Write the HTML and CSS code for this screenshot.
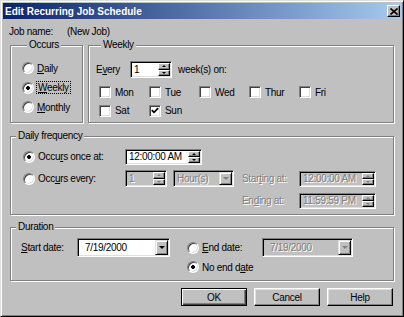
FILE: index.html
```html
<!DOCTYPE html>
<html lang="en">
<head>
  <meta charset="UTF-8" />
  <title>Edit Recurring Job Schedule</title>
  <link rel="stylesheet" href="styles.css">
</head>
<body>
  <div class="window">
    <div class="titlebar">
      <span class="title">Edit Recurring Job Schedule</span>
      <span class="close-btn">
        <svg width="8" height="7" viewBox="0 0 8 7"><path d="M0.5 0.5 L7.5 6.5 M7.5 0.5 L0.5 6.5" stroke="#000" stroke-width="1.6"/></svg>
      </span>
    </div>

    <div class="content">
      <div class="job-row">
        <span class="job-label">Job name:</span>
        <span>(New Job)</span>
      </div>

      <div class="top-row">
        <!-- Occurs -->
        <fieldset class="group occurs">
          <legend>Occurs</legend>
          <div class="radio-list">
            <div class="radio-row"><span class="radio"></span><span><u>D</u>aily</span></div>
            <div class="radio-row"><span class="radio checked"></span><span class="focus"><u>W</u>eekly</span></div>
            <div class="radio-row"><span class="radio"></span><span><u>M</u>onthly</span></div>
          </div>
        </fieldset>

        <!-- Weekly -->
        <fieldset class="group weekly">
          <legend>Weekly</legend>
          <div class="every-row">
            <span class="every-label">E<u>v</u>ery</span>
            <span class="field every-field">
              <span class="value">1</span>
              <span class="spin"><span class="spin-btn up"></span><span class="spin-btn down"></span></span>
            </span>
            <span>week(s) on:</span>
          </div>
          <div class="days">
            <div class="check"><span class="box"></span>Mon</div>
            <div class="check"><span class="box"></span>Tue</div>
            <div class="check"><span class="box"></span>Wed</div>
            <div class="check"><span class="box"></span>Thur</div>
            <div class="check"><span class="box"></span>Fri</div>
            <div class="check"><span class="box"></span>Sat</div>
            <div class="check">
              <span class="box">
                <svg width="8" height="7" viewBox="0 0 8 7"><path d="M0.8 3.2 L3 5.4 L7.2 1.2" stroke="#000" stroke-width="1.7" fill="none"/></svg>
              </span>Sun
            </div>
          </div>
        </fieldset>
      </div>

      <!-- Daily frequency -->
      <fieldset class="group daily">
        <legend>Daily frequency</legend>
        <div class="freq-grid">
          <div class="radio-row once-choice"><span class="radio checked"></span><span>Occu<u>r</u>s once at:</span></div>
          <span class="field time-field once-field">
            <span class="value">12:00:00 AM</span>
            <span class="spin"><span class="spin-btn up"></span><span class="spin-btn down"></span></span>
          </span>

          <div class="radio-row every-choice"><span class="radio"></span><span>Occ<u>u</u>rs every:</span></div>
          <span class="field disabled num-field">
            <span class="value">1</span>
            <span class="spin"><span class="spin-btn up"></span><span class="spin-btn down"></span></span>
          </span>
          <span class="field disabled combo hour-field">
            <span class="value">Hour(s)</span>
            <span class="drop"></span>
          </span>
          <span class="dim starting-label">Star<u>t</u>ing at:</span>
          <span class="field disabled time-field starting-field">
            <span class="value">12:00:00 AM</span>
            <span class="spin"><span class="spin-btn up"></span><span class="spin-btn down"></span></span>
          </span>

          <span class="dim ending-label">En<u>d</u>ing at:</span>
          <span class="field disabled time-field ending-field">
            <span class="value">11:59:59 PM</span>
            <span class="spin"><span class="spin-btn up"></span><span class="spin-btn down"></span></span>
          </span>
        </div>
      </fieldset>

      <!-- Duration -->
      <fieldset class="group duration">
        <legend>Duration</legend>
        <div class="dur-grid">
          <span><u>S</u>tart date:</span>
          <span class="field combo date-field">
            <span class="value">7/19/2000</span>
            <span class="drop"></span>
          </span>
          <span></span>
          <div class="radio-row"><span class="radio"></span><span><u>E</u>nd date:</span></div>
          <span class="field combo disabled date-field">
            <span class="value">7/19/2000</span>
            <span class="drop"></span>
          </span>
          <div class="radio-row no-end"><span class="radio checked"></span><span>No end d<u>a</u>te</span></div>
        </div>
      </fieldset>

      <div class="buttons">
        <span class="btn default">OK</span>
        <span class="btn">Cancel</span>
        <span class="btn">Help</span>
      </div>
    </div>
  </div>
</body>
</html>
```

FILE: styles.css
```css
* {
  box-sizing: border-box;
  margin: 0;
  padding: 0;
}

body {
  font-family: "Liberation Sans", Arial, sans-serif;
  font-size: 10px;
  letter-spacing: -0.3px;
  color: #000;
  background: #c0c0c0;
}

u {
  text-decoration: underline;
  text-underline-offset: 1px;
}

/* window frame */
.window {
  width: 404px;
  height: 317px;
  background: #c0c0c0;
  border: 1px solid;
  border-color: #dfdfdf #000 #000 #dfdfdf;
  box-shadow: inset 1px 1px #fff, inset -1px -1px #808080;
  padding: 2px;
  display: flex;
  flex-direction: column;
}

.titlebar {
  height: 16px;
  display: flex;
  align-items: center;
  justify-content: space-between;
  padding: 0 1px 0 2px;
  background: linear-gradient(to right, #0a246a, #a6caf0);
  color: #fff;
}

.title {
  font-weight: bold;
  letter-spacing: 0;
}

.close-btn {
  width: 13px;
  height: 12px;
  display: flex;
  align-items: center;
  justify-content: center;
  background: #c0c0c0;
  border: 1px solid;
  border-color: #fff #000 #000 #fff;
  box-shadow: inset -1px -1px #808080;
}

.content {
  flex: 1;
  padding: 0 7px;
  display: flex;
  flex-direction: column;
}

.job-row {
  margin-top: 6px;
  margin-left: -1px;
  height: 13px;
  line-height: 13px;
  display: flex;
}

.job-label {
  width: 58px;
}

/* group boxes */
.group {
  border: 1px solid #808080;
  box-shadow: inset 1px 1px #fff, 1px 1px #fff;
  min-width: 0;
}

.group legend {
  margin-left: 5px;
  padding: 0 2px;
  line-height: 12px;
  background: #c0c0c0;
}

.top-row {
  margin-top: 1px;
  height: 84px;
  display: flex;
  gap: 5px;
}

.occurs {
  width: 73px;
  padding-left: 11px;
}

.radio-list {
  padding-top: 10px;
  display: flex;
  flex-direction: column;
  gap: 5.5px;
}

.radio-row {
  height: 14px;
  display: flex;
  align-items: center;
  gap: 3px;
  white-space: nowrap;
}

.radio {
  width: 12px;
  height: 12px;
  flex: none;
  border-radius: 50%;
  background: #fff;
  border: 1px solid;
  border-color: #808080 #fff #fff #808080;
  box-shadow: inset 1px 1px #404040, inset -1px -1px #dfdfdf;
}

.radio.checked {
  background: radial-gradient(circle, #000 1.6px, #fff 2.2px);
}

.focus {
  padding: 0 1px;
  line-height: 11px;
  outline: 1px dotted #000;
}

.weekly {
  flex: 1;
  padding: 10px 0 0 7px;
}

.every-row {
  height: 17px;
  display: flex;
  align-items: center;
}

.every-label {
  width: 34px;
}

.every-field {
  width: 42px;
  height: 17px;
  margin-right: 6px;
}

.days {
  margin: 7px 0 0 3px;
  display: grid;
  grid-template-columns: repeat(5, 50px);
  grid-auto-rows: 14px;
  row-gap: 4.5px;
}

.check {
  display: flex;
  align-items: center;
  gap: 4px;
}

.box {
  width: 12px;
  height: 12px;
  display: flex;
  align-items: center;
  justify-content: center;
  background: #fff;
  border: 1px solid;
  border-color: #808080 #fff #fff #808080;
  box-shadow: inset 1px 1px #404040, inset -1px -1px #dfdfdf;
}

/* edit fields, spinners, combos */
.field {
  display: flex;
  align-items: stretch;
  background: #fff;
  border: 1px solid;
  border-color: #808080 #fff #fff #808080;
  box-shadow: inset 1px 1px #000, inset -1px -1px #dfdfdf;
  padding: 1px;
}

.field .value {
  flex: 1;
  padding-left: 2px;
  display: flex;
  align-items: center;
  white-space: nowrap;
  overflow: hidden;
}

.field.disabled {
  background: #c0c0c0;
  color: #808080;
}

.field.disabled .value,
.dim {
  color: #808080;
  text-shadow: 1px 1px #fff;
}

.spin {
  width: 12px;
  display: flex;
  flex-direction: column;
}

.spin-btn {
  flex: 1;
  display: flex;
  align-items: center;
  justify-content: center;
  background: #c0c0c0;
  border: 1px solid;
  border-color: #fff #000 #000 #fff;
  box-shadow: inset -1px -1px #808080;
}

.spin-btn::before {
  content: "";
  border-left: 2px solid transparent;
  border-right: 2px solid transparent;
}

.spin-btn.up::before {
  border-bottom: 2px solid #000;
}

.spin-btn.down::before {
  border-top: 2px solid #000;
}

.disabled .spin-btn::before {
  border-top-color: #808080;
  border-bottom-color: #808080;
}

.disabled .spin-btn.up::before {
  border-top-color: transparent;
}

.disabled .spin-btn.down::before {
  border-bottom-color: transparent;
}

.drop {
  width: 13px;
  display: flex;
  align-items: center;
  justify-content: center;
  background: #c0c0c0;
  border: 1px solid;
  border-color: #dfdfdf #000 #000 #dfdfdf;
  box-shadow: inset 1px 1px #fff, inset -1px -1px #808080;
}

.drop::before {
  content: "";
  border-left: 3px solid transparent;
  border-right: 3px solid transparent;
  border-top: 3px solid #000;
}

.disabled .drop::before {
  border-top-color: #808080;
}

/* daily frequency */
.daily {
  margin-top: 7px;
}

.freq-grid {
  padding: 6px 0 5px 12px;
  display: grid;
  grid-template-columns: 102px 48px 69px 57px 76px;
  grid-template-rows: repeat(3, 17px);
  row-gap: 5px;
  align-items: center;
}

.time-field {
  width: 77px;
  height: 16px;
}

.once-choice {
  grid-area: 1 / 1;
}

.once-field {
  grid-area: 1 / 2 / 2 / 4;
}

.every-choice {
  grid-area: 2 / 1;
}

.num-field {
  grid-area: 2 / 2;
  width: 42px;
  height: 17px;
}

.hour-field {
  grid-area: 2 / 3;
  width: 61px;
  height: 17px;
}

.starting-label {
  grid-area: 2 / 4;
}

.starting-field {
  grid-area: 2 / 5;
}

.ending-label {
  grid-area: 3 / 4;
}

.ending-field {
  grid-area: 3 / 5;
}

/* duration */
.duration {
  margin-top: 6px;
}

.dur-grid {
  padding: 5px 0 6px 10px;
  display: grid;
  grid-template-columns: 56px 93px 17px 75px 91px;
  grid-template-rows: 19px 14px;
  row-gap: 3px;
  align-items: center;
}

.date-field {
  height: 19px;
}

.date-field .value {
  padding-left: 6px;
}

.no-end {
  grid-column: 4 / 6;
}

/* buttons */
.buttons {
  margin-top: 7px;
  margin-right: 1px;
  display: flex;
  justify-content: flex-end;
  gap: 7px;
}

.btn {
  width: 66px;
  height: 18px;
  display: flex;
  align-items: center;
  justify-content: center;
  background: #c0c0c0;
  border: 1px solid;
  border-color: #fff #000 #000 #fff;
  box-shadow: inset -1px -1px #808080, inset 1px 1px #dfdfdf;
}

.btn.default {
  border-color: #000;
  box-shadow: inset 1px 1px #fff, inset -1px -1px #404040, inset -2px -2px #808080;
}
```
